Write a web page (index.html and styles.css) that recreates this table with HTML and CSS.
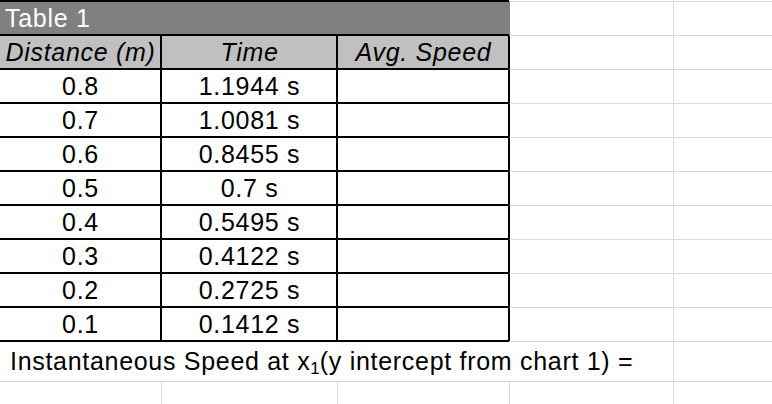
FILE: index.html
```html
<!DOCTYPE html>
<html>
<head>
<meta charset="utf-8">
<link rel="stylesheet" href="styles.css">
</head>
<body>
<div class="sheet">
  <!-- title row -->
  <div class="c title t top">Table 1</div>
  <div class="c d-title"></div>
  <div class="c"></div>

  <!-- header row -->
  <div class="c a t hdr head top">Distance (m)</div>
  <div class="c t hdr head top lft">Time</div>
  <div class="c t hdr head top lft">Avg. Speed</div>
  <div class="c edge"></div>
  <div class="c"></div>

  <div class="c a t top">0.8</div><div class="c t top lft">1.1944 s</div><div class="c t top lft"></div><div class="c edge"></div><div class="c"></div>
  <div class="c a t top">0.7</div><div class="c t top lft">1.0081 s</div><div class="c t top lft"></div><div class="c edge"></div><div class="c"></div>
  <div class="c a t top">0.6</div><div class="c t top lft">0.8455 s</div><div class="c t top lft"></div><div class="c edge"></div><div class="c"></div>
  <div class="c a t top">0.5</div><div class="c t top lft">0.7 s</div><div class="c t top lft"></div><div class="c edge"></div><div class="c"></div>
  <div class="c a t top">0.4</div><div class="c t top lft">0.5495 s</div><div class="c t top lft"></div><div class="c edge"></div><div class="c"></div>
  <div class="c a t top">0.3</div><div class="c t top lft">0.4122 s</div><div class="c t top lft"></div><div class="c edge"></div><div class="c"></div>
  <div class="c a t top">0.2</div><div class="c t top lft">0.2725 s</div><div class="c t top lft"></div><div class="c edge"></div><div class="c"></div>
  <div class="c a t top">0.1</div><div class="c t top lft">0.1412 s</div><div class="c t top lft"></div><div class="c edge"></div><div class="c"></div>

  <!-- instantaneous row -->
  <div class="c a top note">Instantaneous Speed at x<span class="sub">1</span>(y intercept from chart 1) =</div>
  <div class="c top nol"></div>
  <div class="c top nol"></div>
  <div class="c nol"></div>
  <div class="c"></div>

  <!-- last row -->
  <div class="c a"></div><div class="c"></div><div class="c"></div><div class="c"></div><div class="c"></div>
</div>
</body>
</html>
```
FILE: styles.css
```css
html, body {
  margin: 0;
  padding: 0;
  background: #fff;
}
body {
  width: 772px;
  height: 404px;
  overflow: hidden;
  font-family: "Liberation Sans", Arial, sans-serif;
  color: #000;
}
.sheet {
  padding-top: 1px;
  display: grid;
  grid-template-columns: 161px 176px 172px 164px 120px;
  grid-template-rows: repeat(10, 34px) 40px 40px;
}
.c {
  box-sizing: border-box;
  border-top: 1px solid #d9d9d9;
  border-left: 1px solid #d9d9d9;
  display: flex;
  align-items: center;
  justify-content: center;
  font-size: 25px;
  letter-spacing: 0.7px;
  white-space: nowrap;
  background: transparent;
}
.a {
  border-left: none;
}
.title {
  grid-column: 1 / span 3;
  border-left: none;
  background: #808080;
  color: #fff;
  justify-content: flex-start;
  padding-left: 5px;
  font-size: 25px;
}
.d-title {
  border-left-color: #808080;
}
.hdr {
  background: #c0c0c0;
}
.head {
  font-style: italic;
}
.top {
  border-top-color: #000;
  box-shadow: 0 -1px 0 #000;
}
.lft {
  border-left-color: #000;
  box-shadow: 0 -1px 0 #000, -1px 0 0 #000;
}
.edge {
  border-left-color: #000;
  box-shadow: -1px 0 0 #000;
}
.nol {
  border-left: none;
}
.note {
  display: block;
  line-height: 38px;
  padding-left: 10px;
  overflow: visible;
}
.sub {
  font-size: 17px;
  letter-spacing: 0;
  position: relative;
  top: 4px;
}
```
